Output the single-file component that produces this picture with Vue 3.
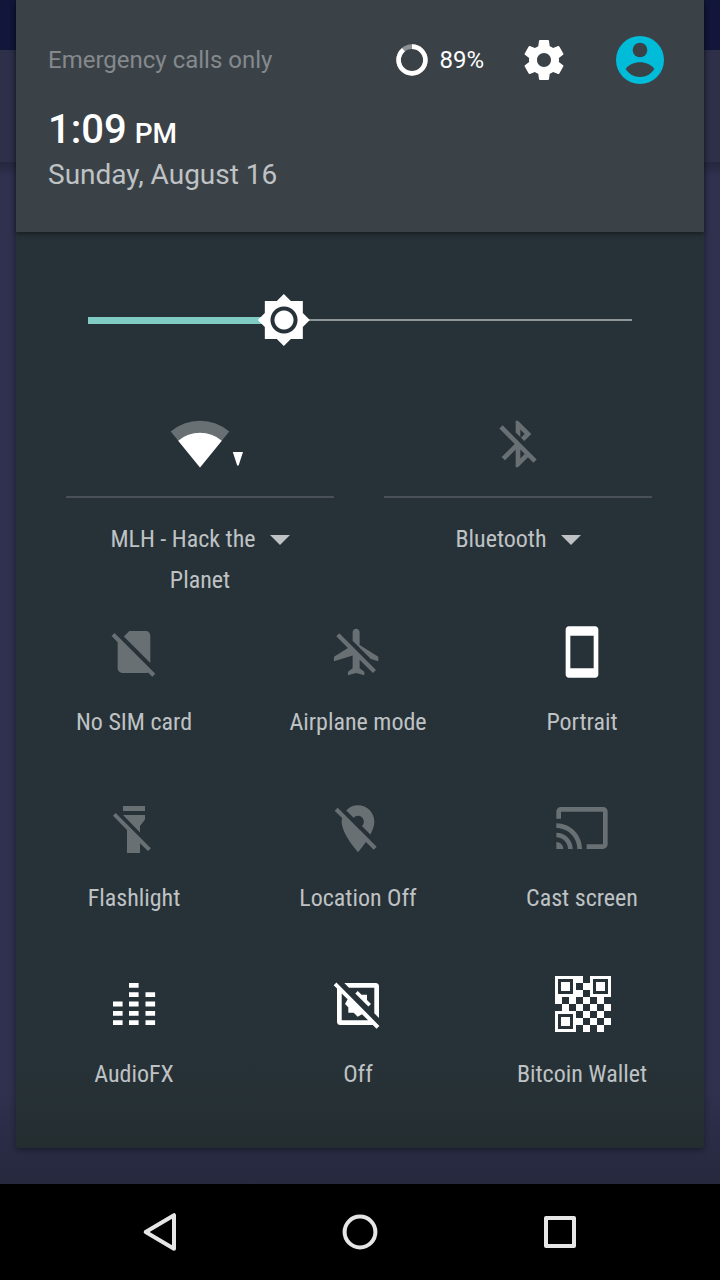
<template>
  <div class="screen">
    <div class="backdrop">
      <main class="panel">
        <header class="panel-header">
          <div class="status-row">
            <span class="carrier">Emergency calls only</span>
            <button class="battery" type="button" aria-label="Battery 89%">
              <svg width="32" height="32" viewBox="0 0 32 32" fill="none" stroke-width="4.6">
                <circle cx="16" cy="16" r="13.4" stroke="#8e9193" />
                <circle cx="16" cy="16" r="13.4" stroke="#fff" pathLength="100" stroke-dasharray="89 11" transform="rotate(-90 16 16)" />
              </svg>
              <span>{{ battery }}%</span>
            </button>
            <button class="settings" type="button" aria-label="Settings">
              <svg width="48" height="48" viewBox="0 0 24 24" fill="#fff">
                <path d="M19.43 12.98c.04-.32.07-.64.07-.98s-.03-.66-.07-.98l2.11-1.65c.19-.15.24-.42.12-.64l-2-3.46c-.12-.22-.39-.3-.61-.22l-2.49 1c-.52-.4-1.08-.73-1.69-.98l-.38-2.65C14.46 2.18 14.25 2 14 2h-4c-.25 0-.46.18-.49.42l-.38 2.65c-.61.25-1.17.59-1.69.98l-2.49-1c-.23-.09-.49 0-.61.22l-2 3.46c-.13.22-.07.49.12.64l2.11 1.65c-.04.32-.07.65-.07.98s.03.66.07.98l-2.11 1.65c-.19.15-.24.42-.12.64l2 3.46c.12.22.39.3.61.22l2.49-1c.52.4 1.08.73 1.69.98l.38 2.65c.03.24.24.42.49.42h4c.25 0 .46-.18.49-.42l.38-2.65c.61-.25 1.17-.59 1.69-.98l2.49 1c.23.09.49 0 .61-.22l2-3.46c.12-.22.07-.49-.12-.64l-2.11-1.65zM12 15.5c-1.93 0-3.5-1.57-3.5-3.5s1.57-3.5 3.5-3.5 3.5 1.57 3.5 3.5-1.57 3.5-3.5 3.5z" />
              </svg>
            </button>
            <button class="avatar" type="button" aria-label="User">
              <svg width="48" height="48" viewBox="0 0 48 48">
                <circle cx="24" cy="24" r="24" fill="#00bcd8" />
                <circle cx="24" cy="14" r="7.3" fill="#3a4248" />
                <path d="M9.7 33c2.5-4.2 9-6.7 14.3-6.7s11.8 2.5 14.3 6.7c-3 5-8.5 8-14.3 8s-11.3-3-14.3-8z" fill="#3a4248" />
              </svg>
            </button>
          </div>
          <div class="clock">1:09 <span class="period">PM</span></div>
          <div class="date">Sunday, August 16</div>
        </header>

        <input
          v-model.number="brightness"
          class="brightness"
          type="range"
          min="0"
          max="100"
          aria-label="Brightness"
          :style="{ '--level': brightness / 100 }"
        />

        <div class="dual-tiles">
          <div v-for="tile in dualTiles" :key="tile.id" class="dual-tile">
            <button class="dual-toggle" type="button" :aria-label="tile.id">
              <svg v-if="tile.id === 'Wi-Fi'" width="88" height="56" viewBox="0 0 88 56">
                <path d="M44 51.5L14.7 15.5A45 45 0 0 1 73.3 15.5z" fill="#697074" />
                <path d="M44 51.5L22.2 24.7A34 34 0 0 1 65.8 24.7zM76.8 36h10.2L82.6 49.5h-1.4z" fill="#fff" />
              </svg>
              <svg v-else width="56" height="56" viewBox="0 0 24 24" fill="#697074">
                <path d="M13 5.83l1.88 1.88-1.6 1.6 1.41 1.41 3.02-3.02L12 2h-1v5.03l2 2v-3.2zM5.41 4L4 5.41 10.59 12 5 17.59 6.41 19 11 14.41V22h1l4.29-4.29 2.3 2.29L20 18.59 5.41 4zM13 18.17v-3.76l1.88 1.88L13 18.17z" />
              </svg>
            </button>
            <button class="dual-label" type="button">
              <span v-for="(line, i) in tile.lines" :key="line" class="dual-line">
                {{ line }}
                <svg v-if="i === 0" width="20" height="10" viewBox="0 0 20 10" fill="#bfc2c4"><path d="M0 0h20L10 10z" /></svg>
              </span>
            </button>
          </div>
        </div>

        <div class="tiles">
          <button v-for="tile in tiles" :key="tile.label" class="tile" :class="{ on: tile.on }" type="button">
            <svg width="56" height="56" :viewBox="tile.box" fill="currentColor">
              <path :d="tile.path" fill-rule="evenodd" />
            </svg>
            <span>{{ tile.label }}</span>
          </button>
        </div>
      </main>
    </div>

    <nav class="nav-bar">
      <button type="button" aria-label="Back">
        <svg width="40" height="40" viewBox="0 0 40 40"><path d="M34 3.2v33.6L5.7 20z" /></svg>
      </button>
      <button type="button" aria-label="Home">
        <svg width="40" height="40" viewBox="0 0 40 40"><circle cx="20" cy="20" r="15.4" /></svg>
      </button>
      <button type="button" aria-label="Recent apps">
        <svg width="40" height="40" viewBox="0 0 40 40"><path d="M6 6h28v28H6z" /></svg>
      </button>
    </nav>
  </div>
</template>

<script setup>
import { ref } from 'vue'

const battery = ref(89)
const brightness = ref(36)

const dualTiles = [
  { id: 'Wi-Fi', lines: ['MLH - Hack the', 'Planet'] },
  { id: 'Bluetooth', lines: ['Bluetooth'] }
]

const rect = (x, y, w, h) => `M${x} ${y}h${w}v${h}h${-w}z`

// equalizer: number of lit segments per column
function equalizerPath() {
  return [[7, 3], [23, 5], [39.5, 4]]
    .map(([x, count]) => Array.from({ length: count }, (_, i) => rect(x, 44.2 - i * 9.3, 9.6, 4.8)).join(''))
    .join('')
}

// 8x8 checkerboard with finder squares in three corners
function qrPath() {
  let d = ''
  for (let row = 0; row < 8; row++) {
    for (let col = 0; col < 8; col++) {
      const inFinder = (row < 3 && (col < 3 || col > 4)) || (row > 4 && col < 3)
      if (!inFinder && (row + col) % 2 === 1) d += rect(col * 7, row * 7, 7, 7)
    }
  }
  for (const [x, y] of [[0, 0], [35, 0], [0, 35]]) {
    d += rect(x, y, 21, 21) + rect(x + 3, y + 3, 15, 15) + rect(x + 6, y + 6, 9, 9)
  }
  return d
}

const tiles = [
  {
    label: 'No SIM card',
    box: '0 0 24 24',
    path: 'M18.99 5c0-1.1-.89-2-1.99-2h-7L7.66 5.34 19 16.68 18.99 5zM3.65 3.88L2.38 5.15 5 7.77V19c0 1.1.9 2 2 2h10.01c.35 0 .67-.1.96-.26l1.88 1.88 1.27-1.27L3.65 3.88z'
  },
  {
    label: 'Airplane mode',
    box: '0.3 0 24 24',
    path: 'M13 9V3.5c0-.83-.67-1.5-1.5-1.5S10 2.67 10 3.5v3.68l7.83 7.83L21 16v-2l-8-5zM3 5.27l4.99 4.99L2 14v2l8-2.5V19l-2 1.5V22l3.5-1 3.5 1v-1.5L13 19v-3.73L18.73 21 20 19.73 4.27 4 3 5.27z'
  },
  {
    label: 'Portrait',
    box: '0 0 24 24',
    on: true,
    path: 'M17.6 1H6.4C5.6 1 5 1.6 5 2.4v19.2c0 .8.6 1.4 1.4 1.4h11.2c.8 0 1.4-.6 1.4-1.4V2.4c0-.8-.6-1.4-1.4-1.4zM17 19H7V5h10v14z'
  },
  {
    label: 'Flashlight',
    box: '0 0 56 56',
    path: 'M17 6h22v5H17zM17 15h22v4.5L34 26v6.5zM7 15.8l2.7-2.7L44.8 48.3 42 51 34 43.2V53H21V30z'
  },
  {
    label: 'Location Off',
    box: '0 -0.3 24 24',
    path: 'M12 6.5c1.38 0 2.5 1.12 2.5 2.5 0 .74-.33 1.39-.83 1.85l3.63 3.63c.98-1.86 1.7-3.8 1.7-5.48 0-3.87-3.13-7-7-7-1.98 0-3.76.83-5.04 2.15l3.19 3.19c.46-.52 1.11-.84 1.85-.84zm4.37 9.6l-4.63-4.63-.11-.11L3.27 3 2 4.27l3.18 3.18C5.07 7.95 5 8.47 5 9c0 5.25 7 13 7 13s1.67-1.85 3.38-4.35L18.73 21 20 19.73l-3.63-3.63z'
  },
  {
    label: 'Cast screen',
    box: '0 0 24 24',
    path: 'M21 3H3c-1.1 0-2 .9-2 2v3h2V5h18v14h-7v2h7c1.1 0 2-.9 2-2V5c0-1.1-.9-2-2-2zM1 18v3h3c0-1.66-1.34-3-3-3zm0-4v2c2.76 0 5 2.24 5 5h2c0-3.87-3.13-7-7-7zm0-4v2c4.97 0 9 4.03 9 9h2c0-6.08-4.93-11-11-11z'
  },
  { label: 'AudioFX', box: '0 0 56 56', on: true, path: equalizerPath() },
  {
    label: 'Off',
    box: '0 0 56 56',
    on: true,
    path: 'M14.3 7H45.5Q49 7 49 10.5V42L44.3 37.3V11.7H19zM25.3 17.5L27.8 15 31.5 18.7H37V24L41 28 38.4 30.6zM3.7 9.2L6.4 6.4 49.4 49.9 46.5 52.7 42.8 49H10.5Q7 49 7 45.5V12.6zM11.7 17.4V44.3H38.1L32 38.2 27.7 40.7 23.7 36.7H18.3V31.3L15 28 17.6 23.3z'
  },
  { label: 'Bitcoin Wallet', box: '-1 0 56 56', on: true, path: qrPath() }
]
</script>

<style>
body {
  margin: 0;
  background: #000;
}
</style>

<style scoped>
.screen {
  min-height: 100vh;
  display: flex;
  flex-direction: column;
  font-family: "Roboto Condensed", Roboto, sans-serif;
  color: #bfc2c4;
}
.backdrop {
  flex: 1;
  padding: 0 16px 36px;
  background:
    linear-gradient(transparent calc(100% - 100px), rgba(30, 32, 46, 0.5)),
    linear-gradient(#11163a 50px, #2e304a 50px, #2e304a 162px, #25273f 162px, #2f314f 176px);
}
.panel {
  background: linear-gradient(#273238 calc(100% - 90px), #242e31);
  border-radius: 0 0 3px 3px;
  box-shadow: 0 2px 6px rgba(0, 0, 0, 0.4);
  padding-bottom: 60px;
}
.panel-header {
  height: 232px;
  box-sizing: border-box;
  padding: 36px 40px 0 32px;
  background: #3a4248;
  box-shadow: 0 2px 5px rgba(0, 0, 0, 0.4);
  font-family: Roboto, sans-serif;
}
button {
  padding: 0;
  border: none;
  background: none;
  color: inherit;
  font: inherit;
  cursor: pointer;
}
svg {
  display: block;
  overflow: visible;
}
.status-row {
  display: flex;
  align-items: center;
  height: 48px;
  font-size: 24px;
  line-height: 28px;
}
.carrier {
  flex: 1;
  color: #85898c;
}
.battery {
  display: flex;
  align-items: center;
  gap: 11px;
  color: #fff;
}
.settings {
  margin: 0 48px 0 36px;
}
.clock {
  margin-top: 22px;
  font-size: 40px;
  font-weight: 500;
  line-height: 48px;
  color: #fff;
}
.period {
  font-size: 28px;
  margin-left: -2px;
}
.date {
  font-size: 28px;
  line-height: 34px;
}
/* the input is half a thumb wider than the track on each side */
.brightness {
  appearance: none;
  display: block;
  width: calc(100% - 92px);
  height: 52px;
  margin: 62px 46px 70px;
  background:
    linear-gradient(#80cbc4, #80cbc4) 26px center / calc((100% - 52px) * var(--level)) 7px no-repeat,
    linear-gradient(#8f9497, #8f9497) center / calc(100% - 52px) 2px no-repeat;
}
.brightness::-webkit-slider-thumb {
  appearance: none;
  width: 52px;
  height: 52px;
  background: radial-gradient(circle, #fff 9px, #273238 10px, #273238 13px, #fff 14px);
  clip-path: polygon(26px 0, 33px 7px, 45px 7px, 45px 19px, 52px 26px, 45px 33px, 45px 45px, 33px 45px, 26px 52px, 19px 45px, 7px 45px, 7px 33px, 0 26px, 7px 19px, 7px 7px, 19px 7px);
}
.dual-tiles {
  display: grid;
  grid-template-columns: 1fr 1fr;
  gap: 50px;
  padding: 0 52px 0 50px;
}
.dual-tile {
  display: flex;
  flex-direction: column;
}
.dual-toggle {
  display: flex;
  justify-content: center;
  padding-bottom: 24px;
  border-bottom: 2px solid #495157;
}
.dual-label {
  margin-top: 21px;
  font-size: 24px;
  line-height: 41px;
}
.dual-line {
  display: flex;
  align-items: center;
  justify-content: center;
  gap: 14px;
}
.tiles {
  display: grid;
  grid-template-columns: repeat(3, 1fr);
  row-gap: 64px;
  padding: 23px 10px 0 6px;
}
.tile {
  display: flex;
  flex-direction: column;
  align-items: center;
  gap: 28px;
  font-size: 24px;
  line-height: 28px;
}
.tile svg {
  color: #697074;
}
.tile.on svg {
  color: #fff;
}
.nav-bar {
  display: flex;
  height: 96px;
  padding: 0 60px;
  background: #000;
}
.nav-bar button {
  flex: 1;
  display: flex;
  align-items: center;
  justify-content: center;
}
.nav-bar svg {
  fill: none;
  stroke: #e6e6e6;
  stroke-width: 4;
  stroke-linejoin: round;
}
</style>
